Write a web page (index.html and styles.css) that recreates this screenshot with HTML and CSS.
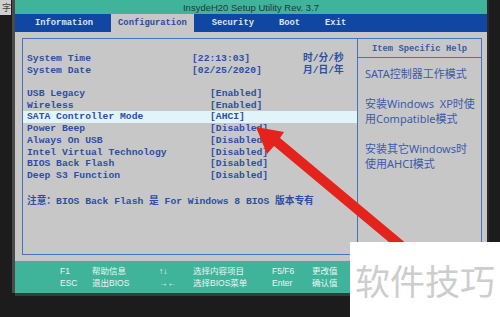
FILE: index.html
```html
<!DOCTYPE html>
<html lang="zh-CN">
<head>
    <meta charset="UTF-8">
    <meta name="viewport" content="width=device-width, initial-scale=1.0">
    <title>InsydeH20 Setup Utility</title>
    <link rel="stylesheet" href="styles.css">
</head>
<body>

    <div class="corner">字</div>

    <div class="monitor">
        <div class="screen">

            <div class="title">InsydeH20 Setup Utility Rev. 3.7</div>

            <!-- Pestañas -->
            <div class="tabs">
                <div class="tab">Information</div>
                <div class="tab active">Configuration</div>
                <div class="tab">Security</div>
                <div class="tab">Boot</div>
                <div class="tab">Exit</div>
            </div>

            <div class="main">
                <div class="panel">

                    <div class="settings">
                        <div class="row"><span>System Time</span><span class="val">[22:13:03]</span><span>时/分/秒</span></div>
                        <div class="row"><span>System Date</span><span class="val">[02/25/2020]</span><span>月/日/年</span></div>
                        <div class="gap"></div>
                        <div class="row"><span>USB Legacy</span><span class="val opt">[Enabled]</span></div>
                        <div class="row"><span>Wireless</span><span class="val opt">[Enabled]</span></div>
                        <div class="row current"><span>SATA Controller Mode</span><span class="val opt">[AHCI]</span></div>
                        <div class="row"><span>Power Beep</span><span class="val opt">[Disabled]</span></div>
                        <div class="row"><span>Always On USB</span><span class="val opt">[Disabled]</span></div>
                        <div class="row"><span>Intel Virtual Technology</span><span class="val opt">[Disabled]</span></div>
                        <div class="row"><span>BIOS Back Flash</span><span class="val opt">[Disabled]</span></div>
                        <div class="row"><span>Deep S3 Function</span><span class="val opt">[Disabled]</span></div>
                        <div class="note">注意：BIOS Back Flash 是 For Windows 8 BIOS 版本专有</div>
                    </div>

                    <div class="help">
                        <div class="help-title">Item Specific Help</div>
                        <div class="help-text">
                            <p>SATA控制器工作模式</p>
                            <p>安装Windows&nbsp; XP时使<br>用Compatible模式</p>
                            <p>安装其它Windows时<br>使用AHCI模式</p>
                        </div>
                    </div>

                </div>
            </div>

            <!-- Teclas -->
            <div class="keys">
                <span>F1</span><span>帮助信息</span><span>↑↓</span><span>选择内容项目</span><span>F5/F6</span><span>更改值</span>
                <span>ESC</span><span>退出BIOS</span><span>→←</span><span>选择BIOS菜单</span><span>Enter</span><span>确认值</span>
            </div>

        </div>
    </div>

    <svg class="arrow" width="500" height="317" viewBox="0 0 500 317">
        <polygon points="256,127 284,132 280,138 408,245 402,253 274,146 267,154" fill="#e5231d"/>
    </svg>

    <div class="mark">软件技巧</div>

</body>
</html>
```

FILE: styles.css
```css
body { margin: 0; width: 500px; height: 317px; overflow: hidden; position: relative; background: #1c1c1c; font-family: "Liberation Sans", sans-serif; }
.corner { position: absolute; left: 0; top: 0; width: 11px; height: 15px; background: #cfcfcf; color: #444; font: 9px/15px "Noto Sans CJK SC", sans-serif; text-align: right; overflow: hidden; }
.monitor { display: flex; padding-left: 15px; }
.screen { width: 472px; height: 293px; display: flex; flex-direction: column; box-shadow: -3px 0 0 #4a4a4a, 0 3px 0 #3a3a3a, 2px 0 0 #2a2a2a; }
.title { height: 14px; background: #3fb49b; color: #1e3a38; font-size: 9.5px; line-height: 15px; text-align: center; }
.tabs { height: 18px; background: #1047a2; display: flex; gap: 11px; padding-left: 13px; }
.tab { padding: 0 7px; line-height: 18px; color: #dde5f1; font: bold 8.8px/18px "Liberation Mono", monospace; }
.tab.active { background: #c7c7c7; color: #2b4b9c; }
.main { flex: 1; background: #c7c7c7; padding: 6px 5px 6px 7px; }
.panel { height: 100%; box-sizing: border-box; border: 1px solid #4673bb; display: grid; grid-template-columns: 334px 1fr; }
.settings { padding-top: 14px; color: #2c4fa3; font: bold 9.7px/11.7px "Liberation Mono", "Noto Sans CJK SC", monospace; }
.row { display: grid; grid-template-columns: 165px 111px auto; height: 11.7px; padding-left: 4px; white-space: nowrap; }
.row .opt { padding-left: 18px; }
.row.current { background: #e1f4f9; }
.gap { height: 11.7px; }
.note { margin-top: 14px; padding-left: 4px; white-space: nowrap; }
.help { border-left: 1px solid #4673bb; }
.help-title { height: 18px; border-bottom: 1px solid #4673bb; text-align: center; color: #3a5aa6; font: bold 8.8px/20px "Liberation Mono", monospace; }
.help-text { padding: 8px 0 0 7px; color: #3c5aaa; font: 11px/15px "Noto Sans", "Noto Sans CJK SC", sans-serif; white-space: nowrap; }
.help-text p { margin: 0 0 15px; }
.keys { height: 32px; box-sizing: border-box; background: #3fb49b; display: grid; grid-template-columns: 32px 67px 34px 79px 40px auto; align-content: start; padding: 5px 0 0 45px; color: #edf4f2; font: 8.5px/11.5px "Liberation Sans Narrow", "Liberation Sans", "Noto Sans CJK SC", sans-serif; white-space: nowrap; }
.arrow { position: absolute; left: 0; top: 0; pointer-events: none; }
.mark { position: absolute; right: 0; bottom: 0; width: 150px; height: 75px; background: #fff; color: #cdcdcd; font: 35px/75px "Noto Sans CJK SC", sans-serif; text-align: center; }
```
